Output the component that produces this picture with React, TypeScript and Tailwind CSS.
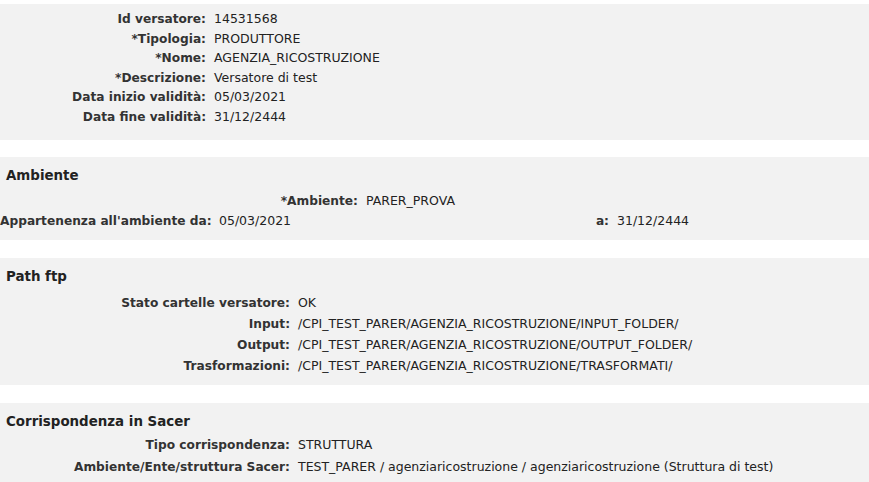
import React from "react";

type Row = { label: string; value: string };

function Field({ label, value, labelW }: Row & { labelW: string }) {
    return (
        <div className="flex items-baseline">
            <div className={`${labelW} shrink-0 text-right font-bold text-[12.2px] text-[#333] whitespace-nowrap`}>{label}</div>
            <div className="pl-[8px] text-[#222] whitespace-nowrap">{value}</div>
        </div>
    );
}

export default function App() {
    const general: Row[] = [
        { label: "Id versatore:", value: "14531568" },
        { label: "*Tipologia:", value: "PRODUTTORE" },
        { label: "*Nome:", value: "AGENZIA_RICOSTRUZIONE" },
        { label: "*Descrizione:", value: "Versatore di test" },
        { label: "Data inizio validità:", value: "05/03/2021" },
        { label: "Data fine validità:", value: "31/12/2444" },
    ];
    const ftp: Row[] = [
        { label: "Stato cartelle versatore:", value: "OK" },
        { label: "Input:", value: "/CPI_TEST_PARER/AGENZIA_RICOSTRUZIONE/INPUT_FOLDER/" },
        { label: "Output:", value: "/CPI_TEST_PARER/AGENZIA_RICOSTRUZIONE/OUTPUT_FOLDER/" },
        { label: "Trasformazioni:", value: "/CPI_TEST_PARER/AGENZIA_RICOSTRUZIONE/TRASFORMATI/" },
    ];
    const sacer: Row[] = [
        { label: "Tipo corrispondenza:", value: "STRUTTURA" },
        { label: "Ambiente/Ente/struttura Sacer:", value: "TEST_PARER / agenziaricostruzione / agenziaricostruzione (Struttura di test)" },
    ];

    return (
        <div className="w-[869px] h-[482px] overflow-hidden bg-white pt-[4px] text-[12.5px] leading-[14px] font-['DejaVu_Sans','Verdana',sans-serif]">
            {/* Dati versatore */}
            <div className="h-[136px] bg-[#f2f2f2] pt-[8px] flex flex-col gap-[5.6px]">
                {general.map((r) => (
                    <Field key={r.label} {...r} labelW="w-[206px]" />
                ))}
            </div>

            {/* Ambiente */}
            <div className="mt-[17px] h-[83px] bg-[#f2f2f2] pt-[11px]">
                <div className="pl-[6px] text-[13.4px] leading-[16px] font-bold text-[#222]">Ambiente</div>
                <div className="mt-[10px] flex items-baseline">
                    <div className="w-[358px] shrink-0 text-right font-bold text-[12.2px] text-[#333]">*Ambiente:</div>
                    <div className="pl-[8px] text-[#222]">PARER_PROVA</div>
                </div>
                <div className="mt-[6px] flex items-baseline">
                    <div className="w-[211px] shrink-0 text-right font-bold text-[12.2px] text-[#333] whitespace-nowrap">Appartenenza all'ambiente da:</div>
                    <div className="w-[384px] shrink-0 pl-[8px] text-[#222]">05/03/2021</div>
                    <div className="w-[14px] text-right font-bold text-[12.2px] text-[#333]">a:</div>
                    <div className="pl-[8px] text-[#222]">31/12/2444</div>
                </div>
            </div>

            {/* Path ftp */}
            <div className="mt-[18px] h-[127px] bg-[#f2f2f2] pt-[11px]">
                <div className="pl-[6px] text-[13.4px] leading-[16px] font-bold text-[#222]">Path ftp</div>
                <div className="mt-[11px] flex flex-col gap-[7px]">
                    {ftp.map((r) => (
                        <Field key={r.label} {...r} labelW="w-[290px]" />
                    ))}
                </div>
            </div>

            {/* Corrispondenza in Sacer */}
            <div className="mt-[18px] h-[90px] bg-[#f2f2f2] pt-[11px]">
                <div className="pl-[6px] text-[13.4px] leading-[16px] font-bold text-[#222]">Corrispondenza in Sacer</div>
                <div className="mt-[8px] flex flex-col gap-[8px]">
                    {sacer.map((r) => (
                        <Field key={r.label} {...r} labelW="w-[290px]" />
                    ))}
                </div>
            </div>
        </div>
    );
}
